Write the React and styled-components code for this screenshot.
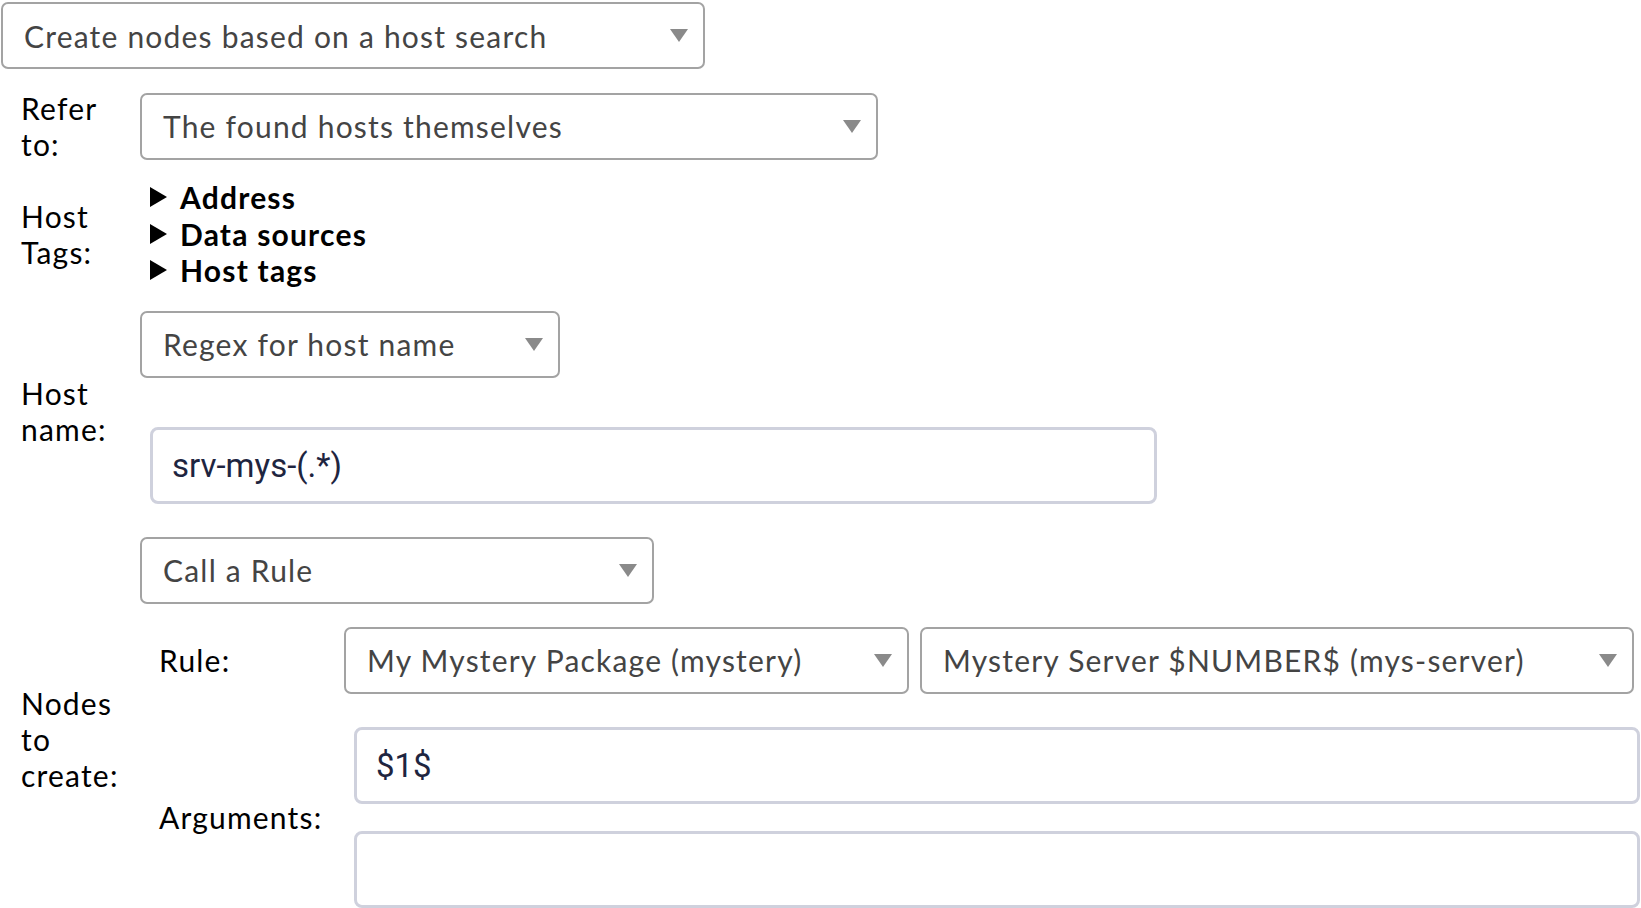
import React from 'react';
import styled, { createGlobalStyle } from 'styled-components';

const GlobalStyle = createGlobalStyle`
  html, body {
    margin: 0;
    padding: 0;
    background: #fff;
  }
  body {
    font-family: Lato, "Open Sans", sans-serif;
    color: #000;
  }
`;

export default function App() {
  return (
    <Page>
      <GlobalStyle />
      <Select width="704px">Create nodes based on a host search</Select>

      <Row $top="21px">
        <Label>Refer<br />to:</Label>
        <Select width="738px">The found hosts themselves</Select>
      </Row>

      <Row $top="17px">
        <Label>Host<br />Tags:</Label>
        <Foldables>
          <Foldable>Address</Foldable>
          <Foldable>Data sources</Foldable>
          <Foldable>Host tags</Foldable>
        </Foldables>
      </Row>

      <Row $top="22px">
        <Label $shift="8px">Host<br />name:</Label>
        <Stack>
          <Select width="420px">Regex for host name</Select>
          <TextInput $indent defaultValue="srv-mys-(.*)" width="1007px" />
        </Stack>
      </Row>

      <Row $top="33px">
        <Label $shift="33px">Nodes<br />to<br />create:</Label>
        <Stack $gap="23px">
          <Select width="514px">Call a Rule</Select>
          <SubRow>
            <SubLabel>Rule:</SubLabel>
            <SelectPair>
              <Select width="565px">My Mystery Package (mystery)</Select>
              <Select width="714px">Mystery Server $NUMBER$ (mys-server)</Select>
            </SelectPair>
          </SubRow>
          <SubRow $top="10px">
            <SubLabel>Arguments:</SubLabel>
            <InputStack>
              <TextInput $indent defaultValue="$1$" width="1286px" />
              <TextInput $indent defaultValue="" width="1286px" />
            </InputStack>
          </SubRow>
        </Stack>
      </Row>
    </Page>
  );
}

function Select({ children, width }) {
  return (
    <SelectBox style={{ width }}>
      <SelectText>{children}</SelectText>
      <Arrow viewBox="0 0 18 13">
        <path d="M0 0 H18 L9 13 Z" fill="#8a8a8a" />
      </Arrow>
    </SelectBox>
  );
}

const Page = styled.div`
  padding: 2px 0 0 1px;
  width: 1640px;
`;

const Row = styled.div`
  display: flex;
  align-items: center;
  margin-top: ${p => p.$top || '0'};
`;

const SelectBox = styled.div`
  box-sizing: border-box;
  flex: none;
  height: 67px;
  display: flex;
  align-items: center;
  justify-content: space-between;
  padding: 0 15px 0 21px;
  border: 2px solid #a3a3a3;
  border-radius: 7px;
  background: #fff;
`;

const SelectText = styled.span`
  font-family: Lato, sans-serif;
  font-size: 30px;
  color: #444;
  letter-spacing: 1.2px;
  white-space: nowrap;
`;

const Arrow = styled.svg`
  width: 18px;
  height: 13px;
  flex: none;
`;

const Label = styled.div`
  box-sizing: border-box;
  flex: none;
  width: 139px;
  padding-left: 20px;
  padding-top: ${p => p.$shift || '0'};
  font-size: 30px;
  line-height: 36px;
  letter-spacing: 1.2px;
`;

const Foldables = styled.div`
  display: flex;
  flex-direction: column;
  padding-left: 10px;
`;

const Foldable = styled.div`
  display: flex;
  align-items: center;
  font-size: 30px;
  font-weight: 700;
  line-height: 36.5px;
  letter-spacing: 1.2px;

  &::before {
    content: '';
    width: 0;
    height: 0;
    border-top: 10px solid transparent;
    border-bottom: 10px solid transparent;
    border-left: 17px solid #000;
    margin-right: 13px;
  }
`;

const Stack = styled.div`
  display: flex;
  flex-direction: column;
  align-items: flex-start;
  gap: ${p => p.$gap || '49px'};
`;

const TextInput = styled.input.attrs({ type: 'text' })`
  box-sizing: border-box;
  width: ${p => p.width};
  height: 77px;
  margin-left: ${p => (p.$indent ? '10px' : '0')};
  padding: 0 19px;
  border: 3px solid #cfd1dd;
  border-radius: 8px;
  font-family: Roboto, sans-serif;
  font-size: 33px;
  color: #1e2540;
  outline: none;
  background: #fff;
`;

const SubRow = styled.div`
  display: flex;
  align-items: center;
  margin-top: ${p => p.$top || '0'};
`;

const SubLabel = styled.div`
  box-sizing: border-box;
  flex: none;
  width: 204px;
  padding-left: 19px;
  font-size: 30px;
  letter-spacing: 1.2px;
`;

const SelectPair = styled.div`
  display: flex;
  gap: 11px;
`;

const InputStack = styled.div`
  display: flex;
  flex-direction: column;
  gap: 27px;
`;
